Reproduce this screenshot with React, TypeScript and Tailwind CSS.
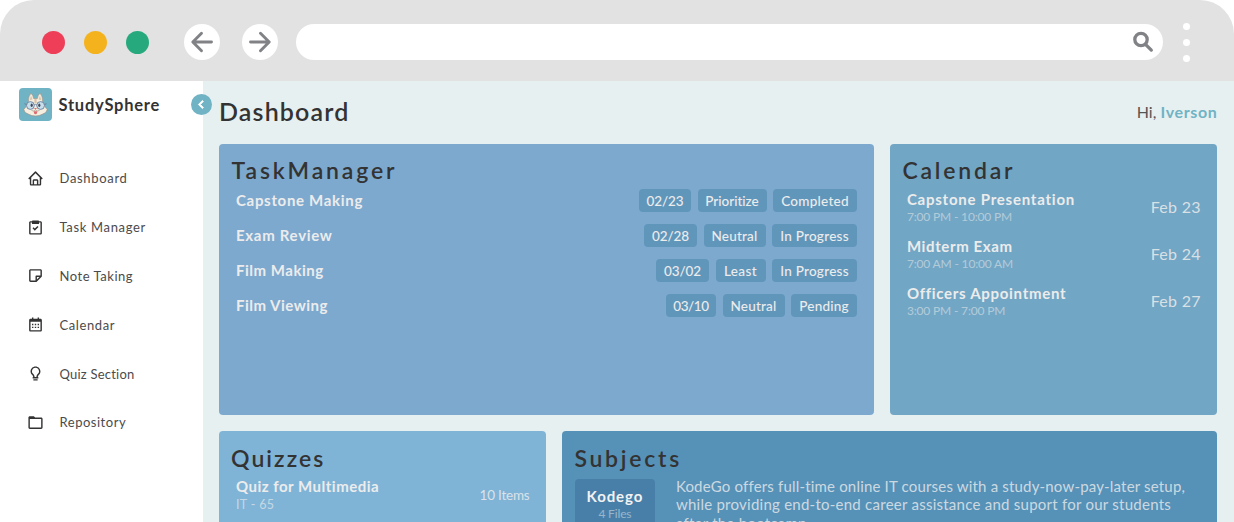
import type { ReactNode } from "react";
import { BiBulb, BiCalendar, BiChevronLeft, BiFolder, BiHome, BiNote, BiTask } from "react-icons/bi";

const nav = [
  { icon: BiHome, label: "Dashboard", track: "tracking-[0.68px]" },
  { icon: BiTask, label: "Task Manager", track: "tracking-[0.66px]" },
  { icon: BiNote, label: "Note Taking", track: "tracking-[0.53px]" },
  { icon: BiCalendar, label: "Calendar", track: "tracking-[0.6px]" },
  { icon: BiBulb, label: "Quiz Section", track: "tracking-[0.22px]" },
  { icon: BiFolder, label: "Repository", track: "tracking-[0.52px]" },
];

const tasks = [
  {
    name: "Capstone Making",
    track: "tracking-[0.69px]",
    tags: [
      { text: "02/23", cls: "w-[52px] tracking-[-0.1px]" },
      { text: "Prioritize", cls: "w-[69px] tracking-[-0.01px]" },
      { text: "Completed", cls: "w-[84px] tracking-[0.26px]" },
    ],
  },
  {
    name: "Exam Review",
    track: "tracking-[0.7px]",
    tags: [
      { text: "02/28", cls: "w-[53px] tracking-[-0.1px]" },
      { text: "Neutral", cls: "w-[62px] tracking-[0.2px]" },
      { text: "In Progress", cls: "w-[85px] tracking-[0.27px]" },
    ],
  },
  {
    name: "Film Making",
    track: "tracking-[0.52px]",
    tags: [
      { text: "03/02", cls: "w-[53px] tracking-[-0.1px]" },
      { text: "Least", cls: "w-[50px] tracking-[0.4px]" },
      { text: "In Progress", cls: "w-[85px] tracking-[0.27px]" },
    ],
  },
  {
    name: "Film Viewing",
    track: "tracking-[0.48px]",
    tags: [
      { text: "03/10", cls: "w-[50px] tracking-[-0.4px]" },
      { text: "Neutral", cls: "w-[62px] tracking-[0.2px]" },
      { text: "Pending", cls: "w-[66px] tracking-[0.22px]" },
    ],
  },
];

const events = [
  { name: "Capstone Presentation", time: "7:00 PM - 10:00 PM", date: "Feb 23", track: "tracking-[0.77px]" },
  { name: "Midterm Exam", time: "7:00 AM - 10:00 AM", date: "Feb 24", track: "tracking-[0.62px]" },
  { name: "Officers Appointment", time: "3:00 PM - 7:00 PM", date: "Feb 27", track: "tracking-[0.7px]" },
];

function NavButton({ children }: { children: ReactNode }) {
  return (
    <div className="flex h-9 w-9 items-center justify-center rounded-full bg-white">
      <svg viewBox="0 0 24 24" className="h-6 w-6" fill="none" stroke="#818285" strokeWidth="2.9" strokeLinecap="round" strokeLinejoin="round">
        {children}
      </svg>
    </div>
  );
}

function BrowserBar() {
  return (
    <header className="h-[81px] shrink-0 bg-white">
      <div className="flex h-full items-center rounded-t-[34px] bg-[#e2e2e2] pt-[3px] pl-[42px]">
        <div className="flex gap-[19px]">
          <i className="h-[23px] w-[23px] rounded-full bg-[#ee3e58]" />
          <i className="h-[23px] w-[23px] rounded-full bg-[#f4b21d]" />
          <i className="h-[23px] w-[23px] rounded-full bg-[#26aa7d]" />
        </div>
        <div className="ml-[35px] flex gap-[22px]">
          <NavButton><path d="M21.500 12H3M11.500 3.200 2.800 12l8.700 8.800" /></NavButton>
          <NavButton><path d="M2.500 12H21M12.500 3.200l8.700 8.800-8.700 8.800" /></NavButton>
        </div>
        <div className="ml-[18px] flex h-9 w-[867px] items-center justify-end rounded-full bg-white pr-[9px]">
          <svg viewBox="0 0 22 22" className="h-[22px] w-[22px]" fill="none" stroke="#818285" strokeLinecap="round">
            <circle cx="9" cy="8.500" r="6.200" strokeWidth="3.300" />
            <path d="m14 13.800 5.300 5.300" strokeWidth="3.300" />
          </svg>
        </div>
        <div className="ml-[20px] flex flex-col gap-[9px]">
          <i className="h-[7px] w-[7px] rounded-full bg-white" />
          <i className="h-[7px] w-[7px] rounded-full bg-white" />
          <i className="h-[7px] w-[7px] rounded-full bg-white" />
        </div>
      </div>
    </header>
  );
}

function Logo() {
  return (
    <svg viewBox="0 0 33 33" className="h-[33px] w-[33px] shrink-0">
      <rect width="33" height="33" rx="4" fill="#70b3c5" />
      <path d="M9.500 13.500Q9 8.500 12 5.200q2.200 2 2.600 5.300h3.800q.400-3.300 2.600-5.300 3 3.300 2.500 8.300 2.500 2.500 2.700 5.500l2 2.500-1.400 3-3.600 1.800Q20.500 28 16.500 28t-6.700-1.700l-3.600-1.800-1.400-3 2-2.500q.200-3 2.700-5.500z" fill="#f6eedf" stroke="#9d8b80" strokeWidth=".6" strokeLinejoin="round" />
      <path d="m10.800 12 1.200-4.500 1.500 4zM22.200 12 21 7.500l-1.500 4z" fill="#dcc2a8" />
      <path d="M16.500 11v4" stroke="#dcc2a8" strokeWidth="2.200" />
      <g fill="#c7dfea" stroke="#5d7599" strokeWidth=".8">
        <circle cx="11.400" cy="17.500" r="3.900" />
        <circle cx="21.600" cy="17.500" r="3.900" />
        <path d="M15.300 16.800q1.200-1 2.400 0M7.500 16.500l-2-.8M25.500 16.500l2-.8" fill="none" />
      </g>
      <ellipse cx="12.700" cy="17.200" rx="1.100" ry="1.700" fill="#47465b" />
      <ellipse cx="20.300" cy="17.200" rx="1.100" ry="1.700" fill="#47465b" />
      <path d="M15 20h3l-1.500 1.700z" fill="#dc7277" />
      <path d="M12.500 22.500q2.500 1.200 4-.5 1.500 1.700 4 .5" fill="none" stroke="#9d8b80" strokeWidth=".6" />
      <path d="M14.500 23.300h4q-.5 3-2 3t-2-3z" fill="#d96d72" />
    </svg>
  );
}

function Sidebar() {
  return (
    <aside className="relative w-[203px] shrink-0 bg-white">
      <div className="flex items-center gap-[6.500px] pt-[7px] pl-[19px]">
        <Logo />
        <span className="text-[16.500px] leading-5 font-bold tracking-[0.750px]">StudySphere</span>
      </div>
      <button className="absolute top-[13px] left-[191px] z-10 flex h-[21px] w-[21px] items-center justify-center rounded-full bg-[#70b3c5] text-white">
        <BiChevronLeft className="h-[17px] w-[17px]" stroke="currentColor" strokeWidth="1.200" />
      </button>
      <nav className="flex flex-col pt-[33px]">
        {nav.map(({ icon: Icon, label, track }) => (
          <a key={label} className="flex h-[48.8px] items-center gap-[16px] pl-[26.500px]">
            <Icon className="h-[17px] w-[17px] text-[#333]" />
            <span className={`text-[13px] leading-4 whitespace-nowrap text-[#4b4b4b] ${track}`}>{label}</span>
          </a>
        ))}
      </nav>
    </aside>
  );
}

function Title({ children, track }: { children: ReactNode; track: string }) {
  return <h2 className={`text-[23px] leading-7 font-semibold ${track}`}>{children}</h2>;
}

export default function App() {
  return (
    <div className="flex h-[522px] w-[1234px] flex-col overflow-hidden bg-white font-['Lato',sans-serif] text-[#333]">
      <BrowserBar />
      <div className="flex min-h-0 flex-1">
        <Sidebar />
        <main className="flex min-w-0 flex-1 flex-col bg-[#e7f0f1] pr-[16.500px] pl-4">
          <div className="flex h-[62.500px] shrink-0 items-center justify-between">
            <h1 className="-mt-[2px] text-[25px] leading-8 font-semibold tracking-[1.150px]">Dashboard</h1>
            <p className="text-[16px] leading-5 text-[#555]">
              Hi, <span className="font-bold tracking-[0.650px] text-[#70b3c5]">Iverson</span>
            </p>
          </div>
          <div className="flex shrink-0 gap-[16.400px]">
            <section className="h-[271px] w-[655px] rounded-[4px] bg-[#7da9cf] px-[12.500px] pt-[12.500px]">
              <Title track="tracking-[2.850px]">TaskManager</Title>
              <ul className="flex flex-col gap-3 pt-[5px] pr-[4.500px] pl-[4.500px]">
                {tasks.map((t) => (
                  <li key={t.name} className="flex h-[23px] items-center justify-between">
                    <span className={`-mt-px text-[15px] leading-5 font-bold text-[#ececec] ${t.track}`}>{t.name}</span>
                    <div className="flex gap-[6.500px]">
                      {t.tags.map((g) => (
                        <span key={g.text} className={`flex h-[23px] items-center justify-center rounded-[4px] bg-[#6196bb] pt-px text-[13.500px] font-medium whitespace-nowrap text-[#ececec] ${g.cls}`}>
                          {g.text}
                        </span>
                      ))}
                    </div>
                  </li>
                ))}
              </ul>
            </section>
            <section className="h-[271px] w-[327px] rounded-[4px] bg-[#72a6c5] px-[12px] pt-[12.500px]">
              <Title track="tracking-[2.800px]">Calendar</Title>
              <ul className="flex flex-col gap-[12.200px] pt-[5.500px] pr-[4.500px] pl-[4.500px]">
                {events.map((e) => (
                  <li key={e.name} className="flex h-[35px] justify-between">
                    <div>
                      <p className={`text-[15px] leading-[19px] font-bold text-[#ececec] ${e.track}`}>{e.name}</p>
                      <p className="text-[12px] leading-4 tracking-[-0.170px] text-[#ececec]/55">{e.time}</p>
                    </div>
                    <span className="pt-[7px] text-[16px] leading-5 tracking-[0.300px] text-[#ececec]/85">{e.date}</span>
                  </li>
                ))}
              </ul>
            </section>
          </div>
          <div className="flex shrink-0 gap-[16.400px] pt-[16.500px]">
            <section className="h-[271px] w-[327px] rounded-[4px] bg-[#80b4d7] px-[12px] pt-[12.500px]">
              <Title track="tracking-[2.050px]">Quizzes</Title>
              <div className="flex justify-between pt-[5.500px] pr-[4.500px] pl-[5px]">
                <div>
                  <p className="text-[15px] leading-[19px] font-bold tracking-[0.500px] text-[#ececec]">Quiz for Multimedia</p>
                  <p className="text-[12.500px] leading-[17px] tracking-[0.320px] text-[#ececec]/65">IT - 65</p>
                </div>
                <span className="pt-[8px] text-[13.500px] leading-5 tracking-[-0.200px] text-[#ececec]/85">10 Items</span>
              </div>
            </section>
            <section className="h-[271px] w-[655px] rounded-[4px] bg-[#5691b8] px-[12px] pt-[12.500px]">
              <Title track="tracking-[2.750px]">Subjects</Title>
              <div className="flex gap-[21px] pt-[7px] pl-[0.500px]">
                <div className="h-[81px] w-[80px] shrink-0 rounded-[4px] bg-[#477fa9] pt-[8.500px] text-center">
                  <p className="text-[15px] leading-[19px] font-bold tracking-[0.900px] text-[#f2f2f2]">Kodego</p>
                  <p className="text-[12px] leading-[15px] tracking-[-0.150px] text-[#ececec]/50">4 Files</p>
                </div>
                <p className="-mt-[2px] text-[15px] leading-[18.700px] whitespace-nowrap text-[#ececec]/80">
                  <span className="block tracking-[0.180px]">KodeGo offers full-time online IT courses with a study-now-pay-later setup,</span>
                  <span className="block tracking-[0.250px]">while providing end-to-end career assistance and suport for our students</span>
                  <span className="block tracking-[0.250px]">after the bootcamp.</span>
                </p>
              </div>
            </section>
          </div>
        </main>
      </div>
    </div>
  );
}
